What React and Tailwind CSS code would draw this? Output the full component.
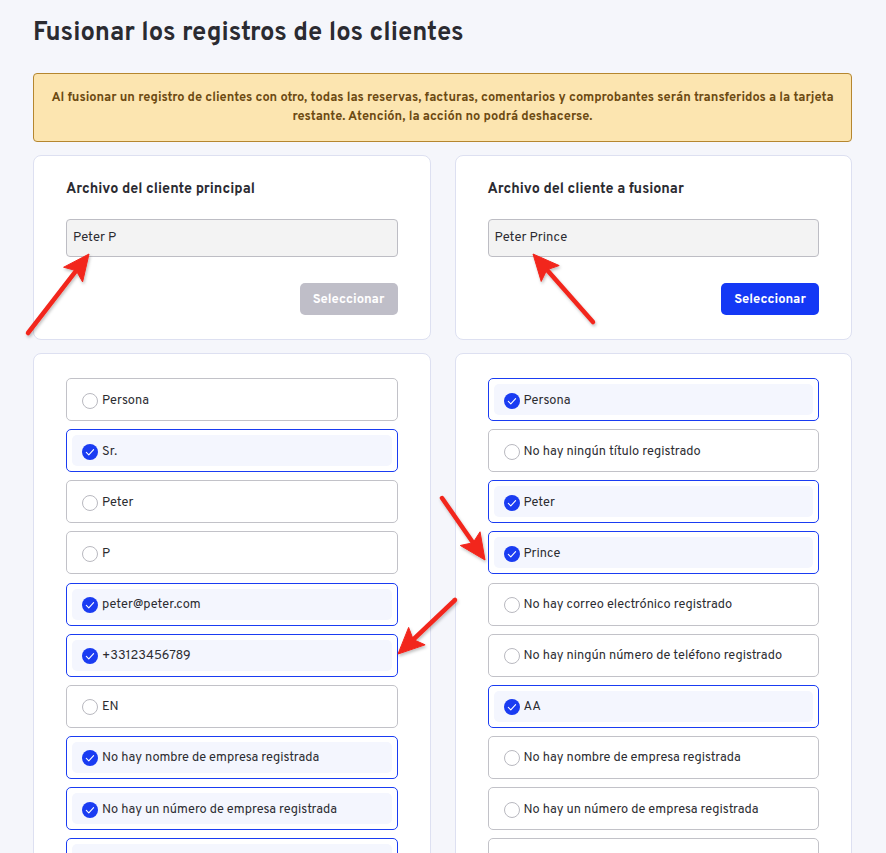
import React from "react";

const left = [
  ["Persona", false],
  ["Sr.", true],
  ["Peter", false],
  ["P", false],
  ["peter@peter.com", true],
  ["+33123456789", true],
  ["EN", false],
  ["No hay nombre de empresa registrada", true],
  ["No hay un número de empresa registrada", true],
  ["No hay ningún número de IVA registrado", true],
  ["No hay ninguna dirección registrada", true],
];
const right = [
  ["Persona", true],
  ["No hay ningún título registrado", false],
  ["Peter", true],
  ["Prince", true],
  ["No hay correo electrónico registrado", false],
  ["No hay ningún número de teléfono registrado", false],
  ["AA", true],
  ["No hay nombre de empresa registrada", false],
  ["No hay un número de empresa registrada", false],
  ["No hay ningún número de IVA registrado", false],
  ["No hay ninguna dirección registrada", false],
];

function Option({ label, checked }) {
  return (
    <div
      className={
        "h-[43px] rounded-[5px] border p-[5px] " +
        (checked ? "border-[#1a3cf2]" : "border-[#c2c2c8]")
      }
    >
      <div
        className={
          "flex h-full items-center gap-[4px] rounded-[5px] pl-[10px] " +
          (checked ? "bg-[#f4f6fe]" : "")
        }
      >
        {checked ? (
          <svg width="16" height="16" viewBox="0 0 16 16" className="mt-[2px] shrink-0">
            <circle cx="8" cy="8" r="8" fill="#1a3cf2" />
            <path d="M4.3 8.3 L6.8 10.8 L11.6 5.6" fill="none" stroke="#ffffff" strokeWidth="1.1" strokeLinecap="round" strokeLinejoin="round" />
          </svg>
        ) : (
          <span className="mt-[2px] block h-[16px] w-[16px] shrink-0 rounded-full border border-[#b9b9c0] bg-white" />
        )}
        <span className="pt-[2px] text-[12.8px] leading-[16px] text-[#2c2c31]">{label}</span>
      </div>
    </div>
  );
}

function Arrow({ x1, y1, x2, y2 }) {
  const dx = x2 - x1;
  const dy = y2 - y1;
  const len = Math.sqrt(dx * dx + dy * dy);
  const ux = dx / len;
  const uy = dy / len;
  const hl = 26;
  const hw = 12;
  const bx = x2 - ux * hl;
  const by = y2 - uy * hl;
  const px = -uy;
  const py = ux;
  const pts = `${x2},${y2} ${bx + px * hw},${by + py * hw} ${bx + ux * 5},${by + uy * 5} ${bx - px * hw},${by - py * hw}`;
  return (
    <g filter="url(#sh)">
      <line x1={x1} y1={y1} x2={bx + ux * 6} y2={by + uy * 6} stroke="#f2261c" strokeWidth="4.5" strokeLinecap="round" />
      <polygon points={pts} fill="#f2261c" strokeLinejoin="round" stroke="#f2261c" strokeWidth="1" />
    </g>
  );
}

export default function App() {
  return (
    <div className="relative min-h-[853px] bg-[#f5f6fb] pl-[33px] pr-[34px] pt-[18px] pb-8" style={{ fontFamily: "Overpass, 'Noto Sans', sans-serif" }}>
      <h1 className="text-[25.6px] font-bold leading-[32px] text-[#2b2b31]">
        Fusionar los registros de los clientes
      </h1>
      <div className="mt-[23px] rounded-[4px] border border-[#b5862f] bg-[#fce5b0] px-4 pt-[15px] pb-[14px] text-center text-[12.8px] font-bold leading-[19px] text-[#6c4a12]">
        Al fusionar un registro de clientes con otro, todas las reservas, facturas, comentarios y comprobantes serán transferidos a la tarjeta
        <br />
        restante. Atención, la acción no podrá deshacerse.
      </div>

      <div className="mt-[13px] grid grid-cols-2 gap-x-[24px] gap-y-[13px]">
        {[
          ["Archivo del cliente principal", "Peter P", false],
          ["Archivo del cliente a fusionar", "Peter Prince", true],
        ].map(([t, v, active]) => (
          <div key={t} className="rounded-[8px] border border-[#dde0f1] bg-white px-[32px] pt-[24px] pb-[24px]">
            <div className="text-[14.4px] font-bold leading-[20px] text-[#2b2b31]">{t}</div>
            <div className="mt-[19px] flex h-[38px] items-center rounded-[4px] border border-[#bdbdc4] bg-[#f3f3f3] px-[6px] pt-[2px] text-[13px] text-[#2b2b31]">
              {v}
            </div>
            <div className="mt-[26px] flex justify-end">
              <button
                className={
                  "h-[32px] w-[98px] rounded-[5px] pt-[3px] text-[13px] font-bold text-white " +
                  (active ? "bg-[#1438f5]" : "bg-[#bfbec8]")
                }
              >
                Seleccionar
              </button>
            </div>
          </div>
        ))}
        {[left, right].map((items, i) => (
          <div key={i} className="flex flex-col gap-[8.15px] rounded-[8px] border border-[#dde0f1] bg-white px-[32px] pt-[24px] pb-[24px]">
            {items.map(([l, c], j) => (
              <Option key={j} label={l} checked={c} />
            ))}
          </div>
        ))}
      </div>

      <svg className="pointer-events-none absolute left-0 top-0" width="886" height="853" viewBox="0 0 886 853">
        <defs>
          <filter id="sh" x="-20%" y="-20%" width="140%" height="140%">
            <feDropShadow dx="1" dy="2" stdDeviation="1.5" floodColor="#000" floodOpacity="0.25" />
          </filter>
        </defs>
        <Arrow x1={28} y1={333} x2={89} y2={254} />
        <Arrow x1={593} y1={322} x2={533} y2={254} />
        <Arrow x1={442} y1={498} x2={485} y2={560} />
        <Arrow x1={455} y1={600} x2={398} y2={654} />
      </svg>
    </div>
  );
}
